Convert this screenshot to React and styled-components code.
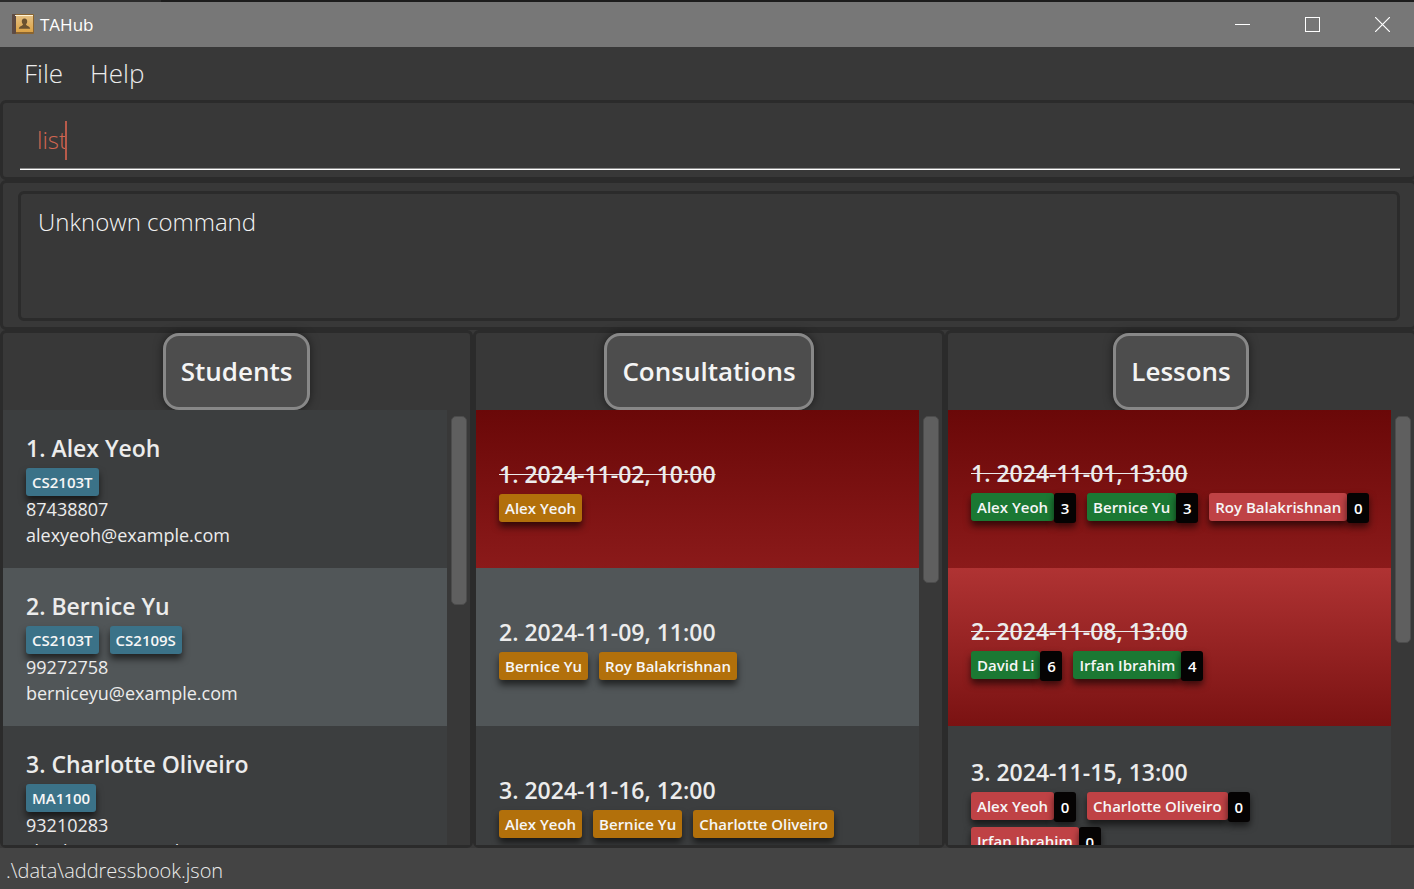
import React, { useState } from "react";
import styled, { createGlobalStyle } from "styled-components";

const GlobalStyle = createGlobalStyle`
  *, *::before, *::after { box-sizing: border-box; }
  html, body, #root { height: 100%; }
  body {
    margin: 0;
    overflow: hidden;
    background: #383838;
    color: #ececec;
    font-family: "Open Sans", "Noto Sans", sans-serif;
  }
`;

const Window = styled.div`
  display: flex;
  flex-direction: column;
  height: 100vh;
  overflow: hidden;
`;

const TitleBar = styled.header`
  display: flex;
  align-items: center;
  height: 47px;
  flex: none;
  padding-left: 12px;
  background: #777777;
  border-top: 2px solid #1c1c1c;
  border-image: linear-gradient(to right, #2b2b2b 163px, #1c1c1c 163px) 2;
`;

const AppTitle = styled.h1`
  flex: 1;
  margin: 0 0 0 6px;
  font-size: 17px;
  line-height: 24px;
  font-weight: 400;
  color: #ffffff;
`;

const WindowButton = styled.button`
  display: grid;
  place-items: center;
  width: 70px;
  height: 45px;
  padding: 0;
  border: 0;
  background: none;
  color: #ffffff;
`;

const WindowButtons = styled.div`
  display: flex;
  margin-right: -3px;
`;

const MenuBar = styled.nav`
  display: flex;
  align-items: flex-start;
  flex: none;
  gap: 27px;
  height: 53px;
  padding-left: 24px;
`;

const MenuButton = styled.button`
  padding: 0;
  border: 0;
  background: none;
  color: #ececec;
  font-family: inherit;
  font-size: 26px;
  font-weight: 300;
  line-height: 52px;
`;

const Panel = styled.section`
  flex: none;
  margin-right: -3px;
  border: 3px solid #2b2b2b;
  border-radius: 6px;
`;

const CommandPanel = styled(Panel)`
  height: 80px;
  padding: 10px 14px 7px 17px;
`;

const CommandField = styled.label`
  display: flex;
  align-items: center;
  height: 57px;
  padding: 0 0 2px 17px;
  border-bottom: 1px solid #ffffff;
  box-shadow: inset 0 -1px #8c8c8c;
`;

const CommandInput = styled.input`
  field-sizing: content;
  padding: 0;
  border: 0;
  outline: 0;
  background: none;
  color: #d06651;
  font-family: inherit;
  font-size: 24px;
  font-weight: 300;
  line-height: 38px;
`;

const Caret = styled.span`
  width: 2px;
  height: 39px;
  margin-left: -2px;
  background: #b85a4a;
`;

const ResultPanel = styled(Panel)`
  height: 150px;
  padding: 8px 14px 8px 15px;
`;

const ResultBox = styled.textarea`
  display: block;
  width: 100%;
  height: 130px;
  padding: 10px 17px;
  border: 3px solid #2b2b2b;
  border-radius: 6px;
  outline: 0;
  resize: none;
  background: #383838;
  color: #f4f4f4;
  font-family: inherit;
  font-size: 24px;
  font-weight: 300;
  line-height: 36px;
`;

const Lists = styled.main`
  display: grid;
  grid-template-columns: 473fr 472fr 472fr;
  flex: 1;
  min-height: 0;
  margin-right: -3px;
`;

const ListPanel = styled.section`
  display: flex;
  flex-direction: column;
  min-width: 0;
  min-height: 0;
  border: 3px solid #2b2b2b;
  border-radius: 6px;
`;

const Heading = styled.h2`
  align-self: center;
  flex: none;
  height: 77px;
  margin: 0;
  padding: 0 15px;
  border: 3px solid #888888;
  border-radius: 16px;
  background: #4d4d4d;
  box-shadow: 0 0 10px rgba(0, 0, 0, 0.5);
  color: #f4f4f4;
  font-size: 26px;
  font-weight: 600;
  line-height: 70px;
`;

const ListBody = styled.div`
  position: relative;
  display: flex;
  flex: 1;
  min-height: 0;
  overflow: hidden;
  background: #383838;
`;

const Cells = styled.ol`
  flex: 1;
  min-width: 0;
  margin: 0;
  padding: 0;
  list-style: none;
`;

const cellFill = {
  odd: "#3c3e3f",
  even: "#515658",
  pastOdd: "linear-gradient(#6a0808, #8b1a1a)",
  pastEven: "linear-gradient(#b03333, #7a1212)",
};

const Cell = styled.li`
  display: flex;
  flex-direction: column;
  justify-content: center;
  height: 158px;
  padding: 0 4px 0 23px;
  background: ${(p) => cellFill[p.$fill]};
`;

const CellTitle = styled.h3`
  margin: 0 0 2px;
  font-size: 23px;
  font-weight: 600;
  line-height: 36px;
  white-space: nowrap;
  text-decoration: ${(p) => (p.$past ? "line-through" : "none")};
  text-decoration-thickness: 1px;
`;

const Details = styled.p`
  position: relative;
  margin: 0;
  font-size: 18px;
  line-height: 26px;
`;

const Tags = styled.div`
  display: flex;
  flex-wrap: wrap;
  gap: 5px 11px;
`;

const TagGroup = styled.span`
  display: flex;
  align-items: flex-start;
`;

const tagColor = {
  course: "#3b7288",
  consult: "#b2700b",
  present: "#1b7833",
  absent: "#bf4245",
};

const Tag = styled.span`
  height: 28px;
  padding: 0 6px;
  border-radius: 3px;
  background: ${(p) => tagColor[p.$kind]};
  box-shadow: 0 5px 7px rgba(0, 0, 0, 0.6);
  color: #f6f6f6;
  font-size: 15px;
  font-weight: 600;
  line-height: 28px;
  white-space: nowrap;
`;

const Count = styled.span`
  width: 22px;
  height: 30px;
  border-radius: 3px;
  background: #050303;
  box-shadow: 0 4px 7px rgba(0, 0, 0, 0.6);
  color: #ffffff;
  font-size: 15px;
  font-weight: 600;
  line-height: 30px;
  text-align: center;
`;

const ScrollTrack = styled.div`
  flex: none;
  width: 23px;
  padding: 6px 3px 0 4px;
`;

const ScrollThumb = styled.div`
  height: ${(p) => p.$size}%;
  border: 1px solid #4c4c4c;
  border-radius: 5px;
  background: #5f5f5f;
`;

const StatusBar = styled.footer`
  flex: none;
  height: 41px;
  padding-left: 6px;
  background: #444444;
  font-size: 20px;
  font-weight: 300;
  line-height: 46px;
`;

const students = [
  { name: "Alex Yeoh", courses: ["CS2103T"], phone: "87438807", email: "alexyeoh@example.com" },
  { name: "Bernice Yu", courses: ["CS2103T", "CS2109S"], phone: "99272758", email: "berniceyu@example.com" },
  { name: "Charlotte Oliveiro", courses: ["MA1100"], phone: "93210283", email: "charlotte@example.com" },
];

const consultations = [
  { when: "2024-11-02, 10:00", past: true, people: ["Alex Yeoh"] },
  { when: "2024-11-09, 11:00", people: ["Bernice Yu", "Roy Balakrishnan"] },
  { when: "2024-11-16, 12:00", people: ["Alex Yeoh", "Bernice Yu", "Charlotte Oliveiro"] },
];

const lessons = [
  {
    when: "2024-11-01, 13:00",
    past: true,
    people: [["Alex Yeoh", 3, true], ["Bernice Yu", 3, true], ["Roy Balakrishnan", 0, false]],
  },
  { when: "2024-11-08, 13:00", past: true, people: [["David Li", 6, true], ["Irfan Ibrahim", 4, true]] },
  {
    when: "2024-11-15, 13:00",
    people: [["Alex Yeoh", 0, false], ["Charlotte Oliveiro", 0, false], ["Irfan Ibrahim", 0, false]],
  },
];

function fillFor(index, past) {
  const even = index % 2 === 1;
  if (past) return even ? "pastEven" : "pastOdd";
  return even ? "even" : "odd";
}

function BookIcon() {
  return (
    <svg width="22" height="22" viewBox="0 0 22 22" aria-hidden="true">
      <defs>
        <linearGradient id="cover" x1="0" y1="0" x2="0" y2="1">
          <stop offset="0" stopColor="#e6c184" />
          <stop offset="1" stopColor="#dca346" />
        </linearGradient>
      </defs>
      <rect x="0" y="0" width="22" height="20" rx="1" fill="#8a6430" />
      <rect x="0" y="0" width="4" height="20" rx="1" fill="#5c4a44" />
      <rect x="4" y="1" width="17" height="17" fill="url(#cover)" />
      <path d="M3 1.500h18" stroke="#fff3d6" />
      <path
        d="M12.500 4.500c2 0 2.900 1.400 2.700 3.200-.1 1.200-.6 2-1.200 2.500 0 1.800 3.800 1.600 4.200 4.600H6.800c.4-3 4.200-2.800 4.200-4.600-.6-.5-1.100-1.300-1.200-2.500C9.600 5.900 10.500 4.500 12.500 4.500z"
        fill="#6b5230"
      />
    </svg>
  );
}

function ListSection({ title, thumb, children }) {
  return (
    <ListPanel aria-label={title}>
      <Heading>{title}</Heading>
      <ListBody>
        <Cells>{children}</Cells>
        <ScrollTrack>
          <ScrollThumb $size={thumb} />
        </ScrollTrack>
      </ListBody>
    </ListPanel>
  );
}

export default function App() {
  const [command, setCommand] = useState("list");
  return (
    <>
      <GlobalStyle />
      <Window>
        <TitleBar>
          <BookIcon />
          <AppTitle>TAHub</AppTitle>
          <WindowButtons>
            <WindowButton aria-label="Minimize">
              <svg width="15" height="15" shapeRendering="crispEdges"><path d="M0 7.500h15" stroke="currentColor" /></svg>
            </WindowButton>
            <WindowButton aria-label="Maximize">
              <svg width="15" height="15" shapeRendering="crispEdges">
                <rect x=".5" y=".5" width="14" height="14" fill="none" stroke="currentColor" />
              </svg>
            </WindowButton>
            <WindowButton aria-label="Close">
              <svg width="15" height="15"><path d="M0 0l15 15M15 0L0 15" stroke="currentColor" strokeWidth="1.200" /></svg>
            </WindowButton>
          </WindowButtons>
        </TitleBar>
        <MenuBar>
          <MenuButton>File</MenuButton>
          <MenuButton>Help</MenuButton>
        </MenuBar>
        <CommandPanel>
          <CommandField>
            <CommandInput
              aria-label="Command"
              value={command}
              onChange={(e) => setCommand(e.target.value)}
            />
            <Caret />
          </CommandField>
        </CommandPanel>
        <ResultPanel>
          <ResultBox aria-label="Result" readOnly value="Unknown command" />
        </ResultPanel>
        <Lists>
          <ListSection title="Students" thumb={44}>
            {students.map((s, i) => (
              <Cell key={s.name} $fill={fillFor(i, false)}>
                <CellTitle>{`${i + 1}. ${s.name}`}</CellTitle>
                <Tags>
                  {s.courses.map((c) => <Tag key={c} $kind="course">{c}</Tag>)}
                </Tags>
                <Details>{s.phone}</Details>
                <Details>{s.email}</Details>
              </Cell>
            ))}
          </ListSection>
          <ListSection title="Consultations" thumb={39}>
            {consultations.map((c, i) => (
              <Cell key={c.when} $fill={fillFor(i, c.past)}>
                <CellTitle $past={c.past}>{`${i + 1}. ${c.when}`}</CellTitle>
                <Tags>
                  {c.people.map((p) => <Tag key={p} $kind="consult">{p}</Tag>)}
                </Tags>
              </Cell>
            ))}
          </ListSection>
          <ListSection title="Lessons" thumb={53}>
            {lessons.map((l, i) => (
              <Cell key={l.when} $fill={fillFor(i, l.past)}>
                <CellTitle $past={l.past}>{`${i + 1}. ${l.when}`}</CellTitle>
                <Tags>
                  {l.people.map(([name, count, present]) => (
                    <TagGroup key={name}>
                      <Tag $kind={present ? "present" : "absent"}>{name}</Tag>
                      <Count>{count}</Count>
                    </TagGroup>
                  ))}
                </Tags>
              </Cell>
            ))}
          </ListSection>
        </Lists>
        <StatusBar>.\data\addressbook.json</StatusBar>
      </Window>
    </>
  );
}
